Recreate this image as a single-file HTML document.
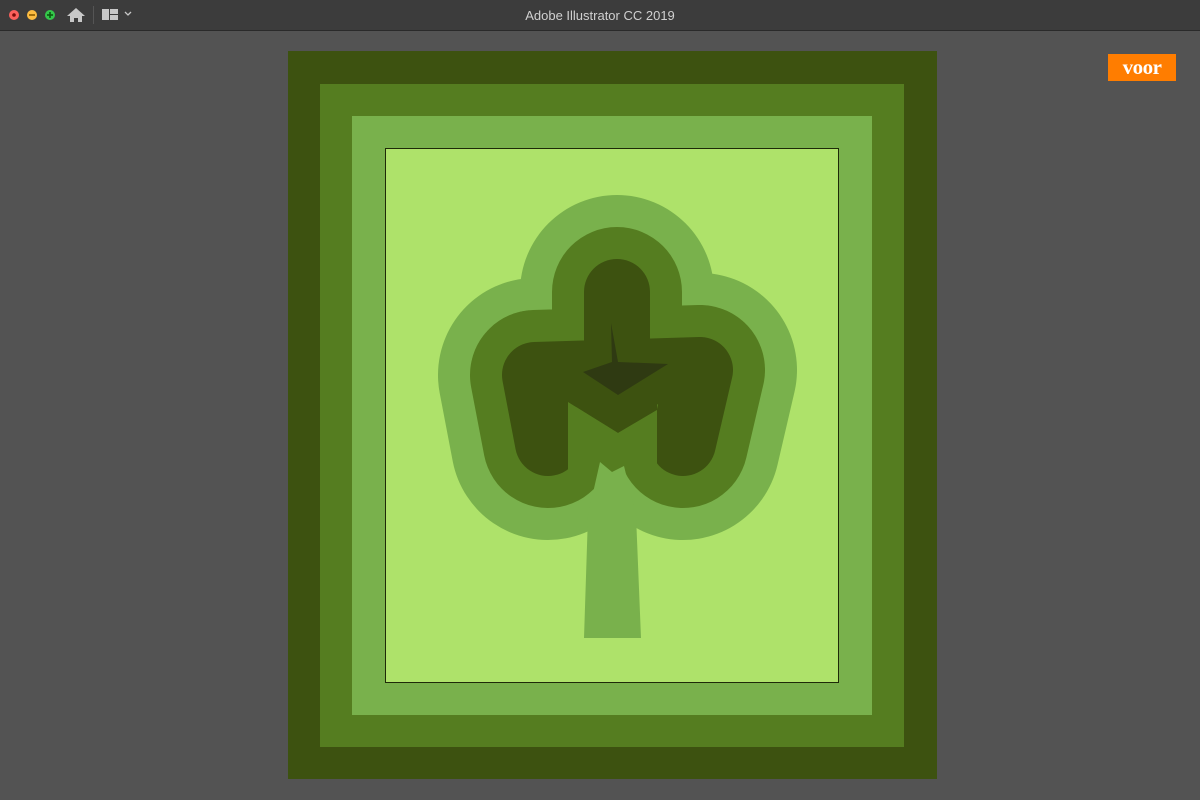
<!DOCTYPE html>
<html><head><style>
body{margin:0;width:1200px;height:800px;background:#535353;position:relative;overflow:hidden;font-family:"Liberation Sans",sans-serif}
.bar{position:absolute;left:0;top:0;width:1200px;height:30px;background:#3c3c3c;border-bottom:1px solid #2a2a2a}
.t{position:absolute;top:8px;width:1200px;text-align:center;color:#d0d0d0;font-size:13px}
.dot{position:absolute;top:10px;width:10px;height:10px;border-radius:50%}
.logo{position:absolute;left:1108px;top:54px;width:68px;height:27px;background:#ff7d00;color:#fff;font:bold 21px "Liberation Serif",serif;text-align:center;line-height:27px;letter-spacing:-0.5px}
</style></head><body>
<div class="bar"><div class="t">Adobe Illustrator CC 2019</div>
<div class="dot" style="left:9px;background:#fc605c"></div>
<div class="dot" style="left:27px;background:#fdbc40"></div>
<div class="dot" style="left:45px;background:#34c84a"></div>
<svg style="position:absolute;left:0;top:0" width="60" height="30"><circle cx="14" cy="15" r="1.8" fill="#7a0c08"/><rect x="29" y="14.2" width="6" height="1.6" fill="#8a5a00"/><rect x="47" y="14.2" width="6" height="1.6" fill="#0a5a10"/><rect x="49.2" y="12" width="1.6" height="6" fill="#0a5a10"/></svg>
<svg style="position:absolute;left:66px;top:7px" width="20" height="16"><path d="M10 1 L19 9 L16 9 L16 15 L12 15 L12 11 L8 11 L8 15 L4 15 L4 9 L1 9Z" fill="#c8c8c8"/></svg>
<div style="position:absolute;left:93px;top:6px;width:1px;height:18px;background:#555"></div>
<svg style="position:absolute;left:101px;top:8px" width="34" height="14"><rect x="1" y="1" width="7" height="11" fill="#c8c8c8"/><rect x="9" y="1" width="8" height="5" fill="#c8c8c8"/><rect x="9" y="7" width="8" height="5" fill="#c8c8c8"/><path d="M24 4 L27 7 L30 4" stroke="#c8c8c8" fill="none" stroke-width="1.3"/></svg>
</div>
<div class="logo">voor</div>
<svg style="position:absolute;left:0;top:0" width="1200" height="800">
<rect x="288" y="51" width="649" height="728" fill="#3d5210"/>
<rect x="320" y="84" width="584" height="663" fill="#557d20"/>
<rect x="352" y="116" width="520" height="599" fill="#79b14c"/>
<rect x="385.5" y="148.5" width="453" height="534" fill="#aee26a" stroke="#1e2a08" stroke-width="1"/>
<g fill="none" stroke-linecap="round" stroke-linejoin="round">
<path d="M617,292 L617,380 M535,375 L700,370 M535,375 L548,443 M700,370 L683,443 M560,400 L680,400" stroke="#79b14c" stroke-width="194"/>
<path d="M617,292 L617,380 M535,375 L700,370 M535,375 L548,443 M700,370 L683,443 M560,400 L680,400" stroke="#557d20" stroke-width="130"/>
<path d="M617,292 L617,360 M535,375 L700,370 M535,375 L548,443 M700,370 L683,443" stroke="#3d5210" stroke-width="66"/>
</g>
<polygon points="568,360 657,360 657,410 618,433 568,402" fill="#3d5210"/>
<polygon points="568,402 618,433 657,410 657,472 568,472" fill="#557d20"/>
<polygon points="600,462 612,472 624,466 636,515 641,638 584,638 588,515" fill="#79b14c"/>
<polygon points="583,372 612,362 611,323 618,362 668,364 618,395" fill="#2f3a12"/>
</svg>
</body></html>
